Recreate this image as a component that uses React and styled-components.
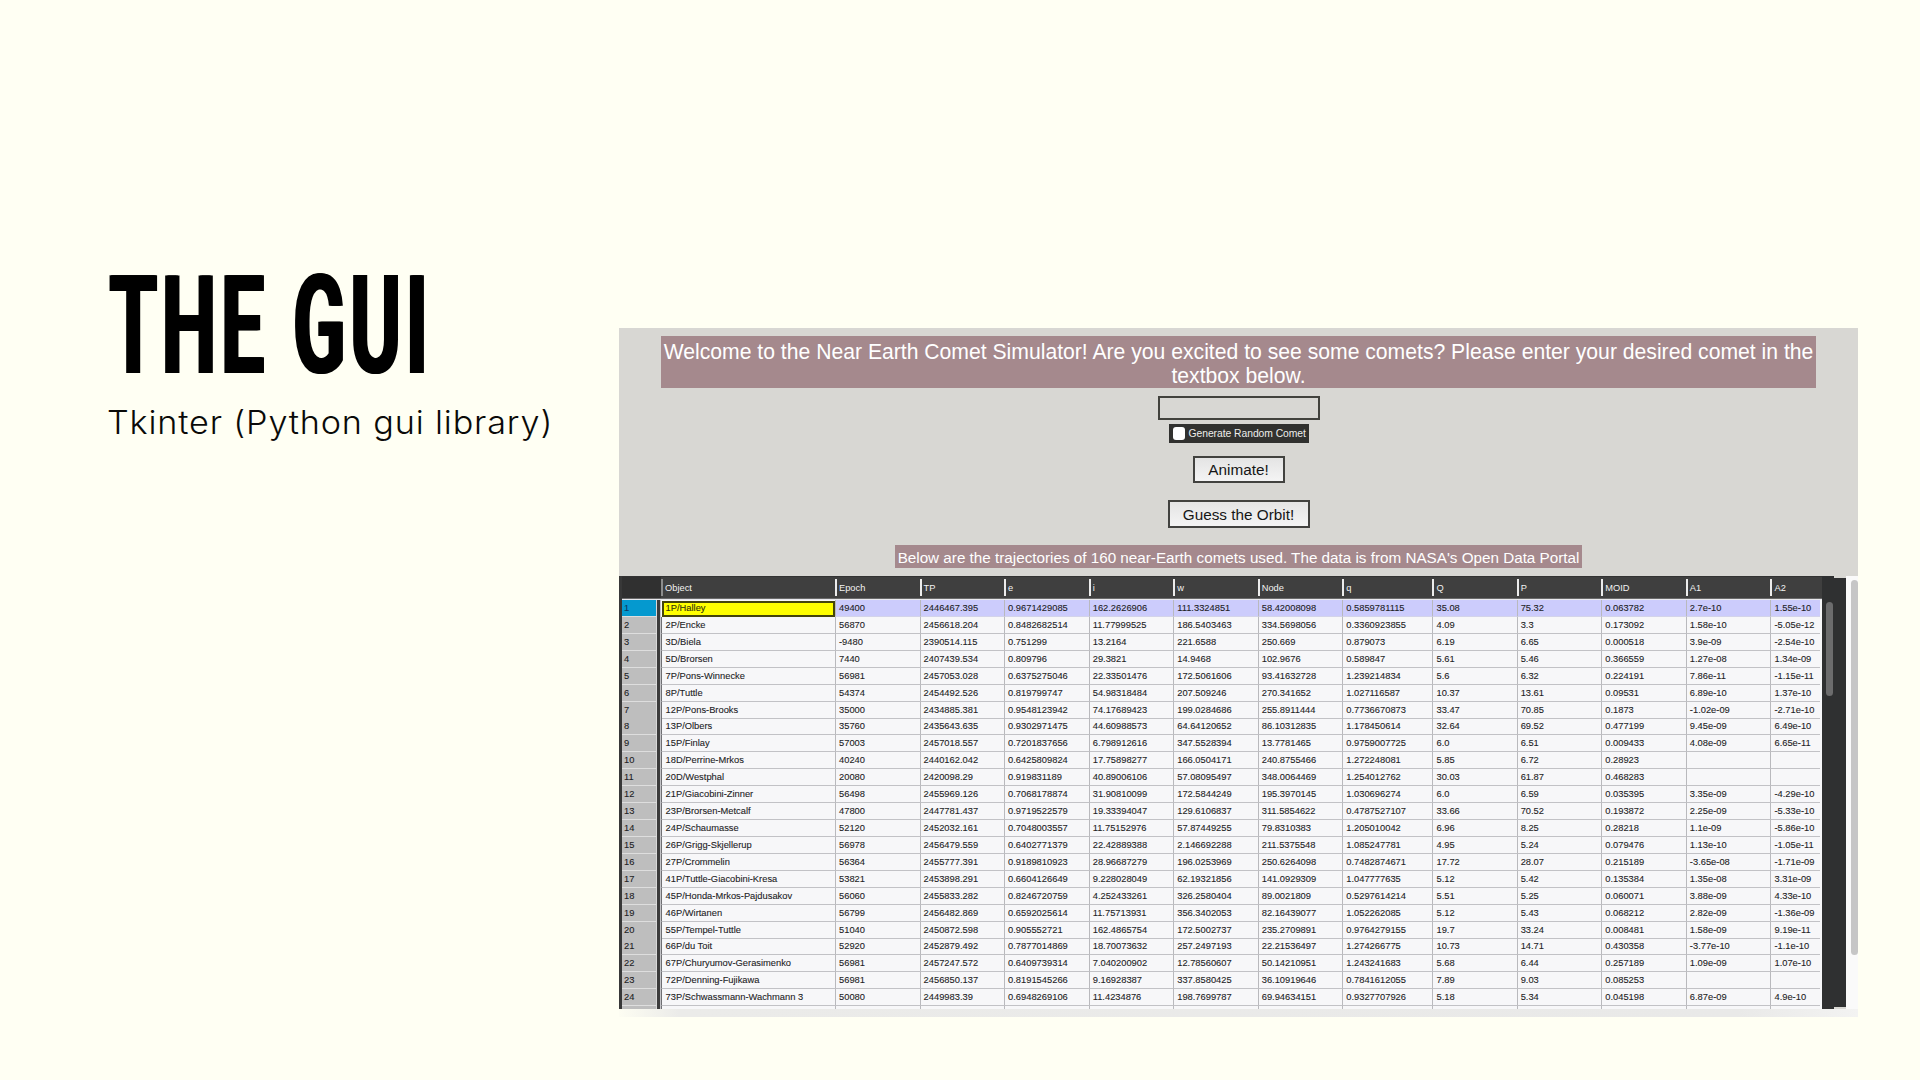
import React from "react";
import styled, { createGlobalStyle } from "styled-components";

const Global = createGlobalStyle`
  html, body { margin: 0; padding: 0; background: #fffff3; }
  *, *::before, *::after { box-sizing: border-box; }
`;

const SANS = `"Liberation Sans", Arial, Helvetica, sans-serif`;

const Slide = styled.main`
  width: 1920px;
  height: 1080px;
  overflow: hidden;
  display: grid;
  grid-template-columns: 619px 1239px;
  align-items: start;
  background: #fffff3;
`;

const Intro = styled.section`
  padding: 257px 0 0 108px;
  white-space: nowrap;
`;

const Title = styled.h1`
  margin: 0;
  height: 138px;
  font: 700 138px/138px Roboto, sans-serif;
  color: #000;
  letter-spacing: 8px;
  word-spacing: 1px;
  text-shadow: 2.5px 0 0 #000, 5px 0 0 #000;
  transform: scaleX(0.56);
  transform-origin: 0 0;
`;

const Subtitle = styled.p`
  margin: 8px 0 0 -1px;
  font: 300 32px/40px Inter, sans-serif;
  letter-spacing: 0.8px;
  color: #0a0a08;
  transform: scaleX(1.068);
  transform-origin: 0 0;
`;

const Window = styled.section`
  margin-top: 328px;
  height: 689px;
  display: flex;
  flex-direction: column;
  background: #d8d7d3;
  font-family: ${SANS};
`;

const Controls = styled.div`
  height: 248px;
  padding: 8px 0 0;
  display: flex;
  flex-direction: column;
  align-items: center;
  white-space: nowrap;
`;

const Banner = styled.div`
  width: 1155px;
  height: 52px;
  padding-top: 4px;
  background: #a5898d;
  color: #fff;
  font-size: 21.16px;
  line-height: 23.5px;
  text-align: center;
`;

const Entry = styled.input`
  width: 162px;
  height: 24px;
  margin-top: 8px;
  padding: 0 4px;
  border: 2px solid #42423d;
  border-radius: 0;
  background: #d8d7d3;
  outline: none;
`;

const CheckRow = styled.label`
  width: 140px;
  height: 19px;
  margin-top: 4px;
  padding-left: 4px;
  display: flex;
  align-items: center;
  gap: 4px;
  background: #31312f;
  color: #ededeb;
  font-size: 10.35px;
  letter-spacing: -0.05px;
  line-height: 20px;
`;

const CheckBox = styled.span`
  flex: none;
  width: 12px;
  height: 13px;
  border-radius: 3px;
  background: #fff;
`;

const Button = styled.button`
  width: ${(p) => p.$w}px;
  height: ${(p) => p.$h}px;
  margin-top: ${(p) => p.$gap}px;
  padding: 1px 0 0;
  border: 2.5px solid #42423f;
  border-radius: 0;
  background: linear-gradient(#e4e4e4, #f4f4f4);
  color: #161616;
  font: 15.3px/20px ${SANS};
`;

const Caption = styled.div`
  width: 687px;
  height: 23px;
  margin-top: 17px;
  background: #a5898d;
  color: #fff;
  font-size: 15.24px;
  line-height: 25px;
  text-align: center;
`;

const Lower = styled.div`
  height: 433px;
  display: flex;
`;

const Sheet = styled.div`
  width: 1203px;
  height: 433px;
  overflow: hidden;
  border-left: 3px solid #383838;
  background: #f7f7f9;
`;

const columns = "34.5px 4.5px 174px 84.6px 84.5px 84.6px 84.5px 84.5px 84.6px 90.2px 84.2px 84.6px 84.6px 84.6px 50px";

const HeadRow = styled.div`
  display: grid;
  grid-template-columns: ${columns};
  height: 22px;
  background: #3f3f3f;
  color: #f2f2f2;
  font-size: 9.3px;
  border-top: 1px solid #333;
`;

const Corner = styled.div`
  grid-column: span 2;
  background: #303030;
`;

const Head = styled.div`
  height: 17px;
  margin-top: 2px;
  padding-left: 2px;
  line-height: 19px;
  border-left: 2px solid ${(p) => (p.$dim ? "#8c8c8c" : "#ececec")};
`;

const HeadRule = styled.div`
  height: 2px;
  background: #e9e9ee;
  border-top: 1px solid #6a6a6a;
`;

const Row = styled.div`
  display: grid;
  grid-template-columns: ${columns};
  height: 16.93px;
  color: #1d1d1f;
  font-size: 9.33px;
  line-height: 16px;
  white-space: nowrap;
  -webkit-text-stroke: 0.1px #1d1d1f;
`;

const Index = styled.div`
  padding-left: 2px;
  border-bottom: 1px solid #dedede;
  border-right: 1px solid #d8d8d8;
  background: ${(p) => (p.$on ? "#0599cf" : "#bebebe")};
  color: ${(p) => (p.$on ? "#0b3c66" : "#1d1d1f")};
`;

const Gutter = styled.div`
  border-left: 3px solid #3c3c3c;
  background: #c4c4c8;
`;

const Cell = styled.div`
  padding-left: ${(p) => (p.$first ? 3.6 : 3)}px;
  border-left: 1px solid ${(p) => (p.$first ? "#6f6f73" : "#b9b9bd")};
  border-bottom: 1px solid ${(p) => (p.$on ? "#d3d3ea" : "#c2c2c6")};
  background: ${(p) => (p.$on ? "#ccccfc" : "transparent")};
`;

const Active = styled.div`
  margin: 1px 0 0 1px;
  padding-left: 1.6px;
  border: 2px solid #45450c;
  background: #ffff00;
  color: #33330a;
  line-height: 11px;
`;

const DarkBar = styled.div`
  width: 24px;
  height: 433px;
  padding: 26px 0 0 4px;
  background: #2f3031;
  clip-path: polygon(0 0, 12px 0, 12px 2px, 100% 2px, 100% 431px, 12px 431px, 12px 100%, 0 100%);
`;

const DarkThumb = styled.div`
  width: 7px;
  height: 94px;
  border-radius: 4px;
  background: #6c6c6d;
`;

const LightBar = styled.div`
  width: 12px;
  height: 433px;
  padding: 4px 0 0 5px;
  background: #fafafa;
`;

const LightThumb = styled.div`
  width: 7px;
  height: 375px;
  border-radius: 4px;
  background: #c6c6c6;
`;

const BottomEdge = styled.div`
  height: 8px;
  background: linear-gradient(90deg, #fdfdf2 0, #ebebe9 60px, #e9e9e8 1120px, #f3f3f2 1239px);
`;

const heads = ["Object", "Epoch", "TP", "e", "i", "w", "Node", "q", "Q", "P", "MOID", "A1", "A2"];

const comets = `1P/Halley|49400|2446467.395|0.9671429085|162.2626906|111.3324851|58.42008098|0.5859781115|35.08|75.32|0.063782|2.7e-10|1.55e-10
2P/Encke|56870|2456618.204|0.8482682514|11.77999525|186.5403463|334.5698056|0.3360923855|4.09|3.3|0.173092|1.58e-10|-5.05e-12
3D/Biela|-9480|2390514.115|0.751299|13.2164|221.6588|250.669|0.879073|6.19|6.65|0.000518|3.9e-09|-2.54e-10
5D/Brorsen|7440|2407439.534|0.809796|29.3821|14.9468|102.9676|0.589847|5.61|5.46|0.366559|1.27e-08|1.34e-09
7P/Pons-Winnecke|56981|2457053.028|0.6375275046|22.33501476|172.5061606|93.41632728|1.239214834|5.6|6.32|0.224191|7.86e-11|-1.15e-11
8P/Tuttle|54374|2454492.526|0.819799747|54.98318484|207.509246|270.341652|1.027116587|10.37|13.61|0.09531|6.89e-10|1.37e-10
12P/Pons-Brooks|35000|2434885.381|0.9548123942|74.17689423|199.0284686|255.8911444|0.7736670873|33.47|70.85|0.1873|-1.02e-09|-2.71e-10
13P/Olbers|35760|2435643.635|0.9302971475|44.60988573|64.64120652|86.10312835|1.178450614|32.64|69.52|0.477199|9.45e-09|6.49e-10
15P/Finlay|57003|2457018.557|0.7201837656|6.798912616|347.5528394|13.7781465|0.9759007725|6.0|6.51|0.009433|4.08e-09|6.65e-11
18D/Perrine-Mrkos|40240|2440162.042|0.6425809824|17.75898277|166.0504171|240.8755466|1.272248081|5.85|6.72|0.28923||
20D/Westphal|20080|2420098.29|0.919831189|40.89006106|57.08095497|348.0064469|1.254012762|30.03|61.87|0.468283||
21P/Giacobini-Zinner|56498|2455969.126|0.7068178874|31.90810099|172.5844249|195.3970145|1.030696274|6.0|6.59|0.035395|3.35e-09|-4.29e-10
23P/Brorsen-Metcalf|47800|2447781.437|0.9719522579|19.33394047|129.6106837|311.5854622|0.4787527107|33.66|70.52|0.193872|2.25e-09|-5.33e-10
24P/Schaumasse|52120|2452032.161|0.7048003557|11.75152976|57.87449255|79.8310383|1.205010042|6.96|8.25|0.28218|1.1e-09|-5.86e-10
26P/Grigg-Skjellerup|56978|2456479.559|0.6402771379|22.42889388|2.146692288|211.5375548|1.085247781|4.95|5.24|0.079476|1.13e-10|-1.05e-11
27P/Crommelin|56364|2455777.391|0.9189810923|28.96687279|196.0253969|250.6264098|0.7482874671|17.72|28.07|0.215189|-3.65e-08|-1.71e-09
41P/Tuttle-Giacobini-Kresa|53821|2453898.291|0.6604126649|9.228028049|62.19321856|141.0929309|1.047777635|5.12|5.42|0.135384|1.35e-08|3.31e-09
45P/Honda-Mrkos-Pajdusakov|56060|2455833.282|0.8246720759|4.252433261|326.2580404|89.0021809|0.5297614214|5.51|5.25|0.060071|3.88e-09|4.33e-10
46P/Wirtanen|56799|2456482.869|0.6592025614|11.75713931|356.3402053|82.16439077|1.052262085|5.12|5.43|0.068212|2.82e-09|-1.36e-09
55P/Tempel-Tuttle|51040|2450872.598|0.905552721|162.4865754|172.5002737|235.2709891|0.9764279155|19.7|33.24|0.008481|1.58e-09|9.19e-11
66P/du Toit|52920|2452879.492|0.7877014869|18.70073632|257.2497193|22.21536497|1.274266775|10.73|14.71|0.430358|-3.77e-10|-1.1e-10
67P/Churyumov-Gerasimenko|56981|2457247.572|0.6409739314|7.040200902|12.78560607|50.14210951|1.243241683|5.68|6.44|0.257189|1.09e-09|1.07e-10
72P/Denning-Fujikawa|56981|2456850.137|0.8191545266|9.16928387|337.8580425|36.10919646|0.7841612055|7.89|9.03|0.085253||
73P/Schwassmann-Wachmann 3|50080|2449983.39|0.6948269106|11.4234876|198.7699787|69.94634151|0.9327707926|5.18|5.34|0.045198|6.87e-09|4.9e-10
||||||||||||`
  .split("\n")
  .map((line) => line.split("|"));

export default function App() {
  return (
    <>
      <Global />
      <Slide>
        <Intro>
          <Title>THE GUI</Title>
          <Subtitle>Tkinter (Python gui library)</Subtitle>
        </Intro>
        <Window>
          <Controls>
            <Banner>
              Welcome to the Near Earth Comet Simulator! Are you excited to see some comets? Please enter your desired comet in the
              <br />
              textbox below.
            </Banner>
            <Entry aria-label="Comet" />
            <CheckRow>
              <CheckBox />
              Generate Random Comet
            </CheckRow>
            <Button $w={92} $h={27} $gap={13}>Animate!</Button>
            <Button $w={142} $h={28} $gap={17}>Guess the Orbit!</Button>
            <Caption>Below are the trajectories of 160 near-Earth comets used. The data is from NASA's Open Data Portal</Caption>
          </Controls>
          <Lower>
            <Sheet>
              <HeadRow>
                <Corner />
                {heads.map((h, i) => (
                  <Head key={h} $dim={i === 0}>{h}</Head>
                ))}
              </HeadRow>
              <HeadRule />
              {comets.map((comet, r) => (
                <Row key={r}>
                  <Index $on={r === 0}>{r < 24 ? r + 1 : ""}</Index>
                  <Gutter />
                  {comet.map((value, c) =>
                    r === 0 && c === 0 ? (
                      <Active key={c}>{value}</Active>
                    ) : (
                      <Cell key={c} $on={r === 0} $first={c === 0}>{value}</Cell>
                    )
                  )}
                </Row>
              ))}
            </Sheet>
            <DarkBar>
              <DarkThumb />
            </DarkBar>
            <LightBar>
              <LightThumb />
            </LightBar>
          </Lower>
          <BottomEdge />
        </Window>
      </Slide>
    </>
  );
}
